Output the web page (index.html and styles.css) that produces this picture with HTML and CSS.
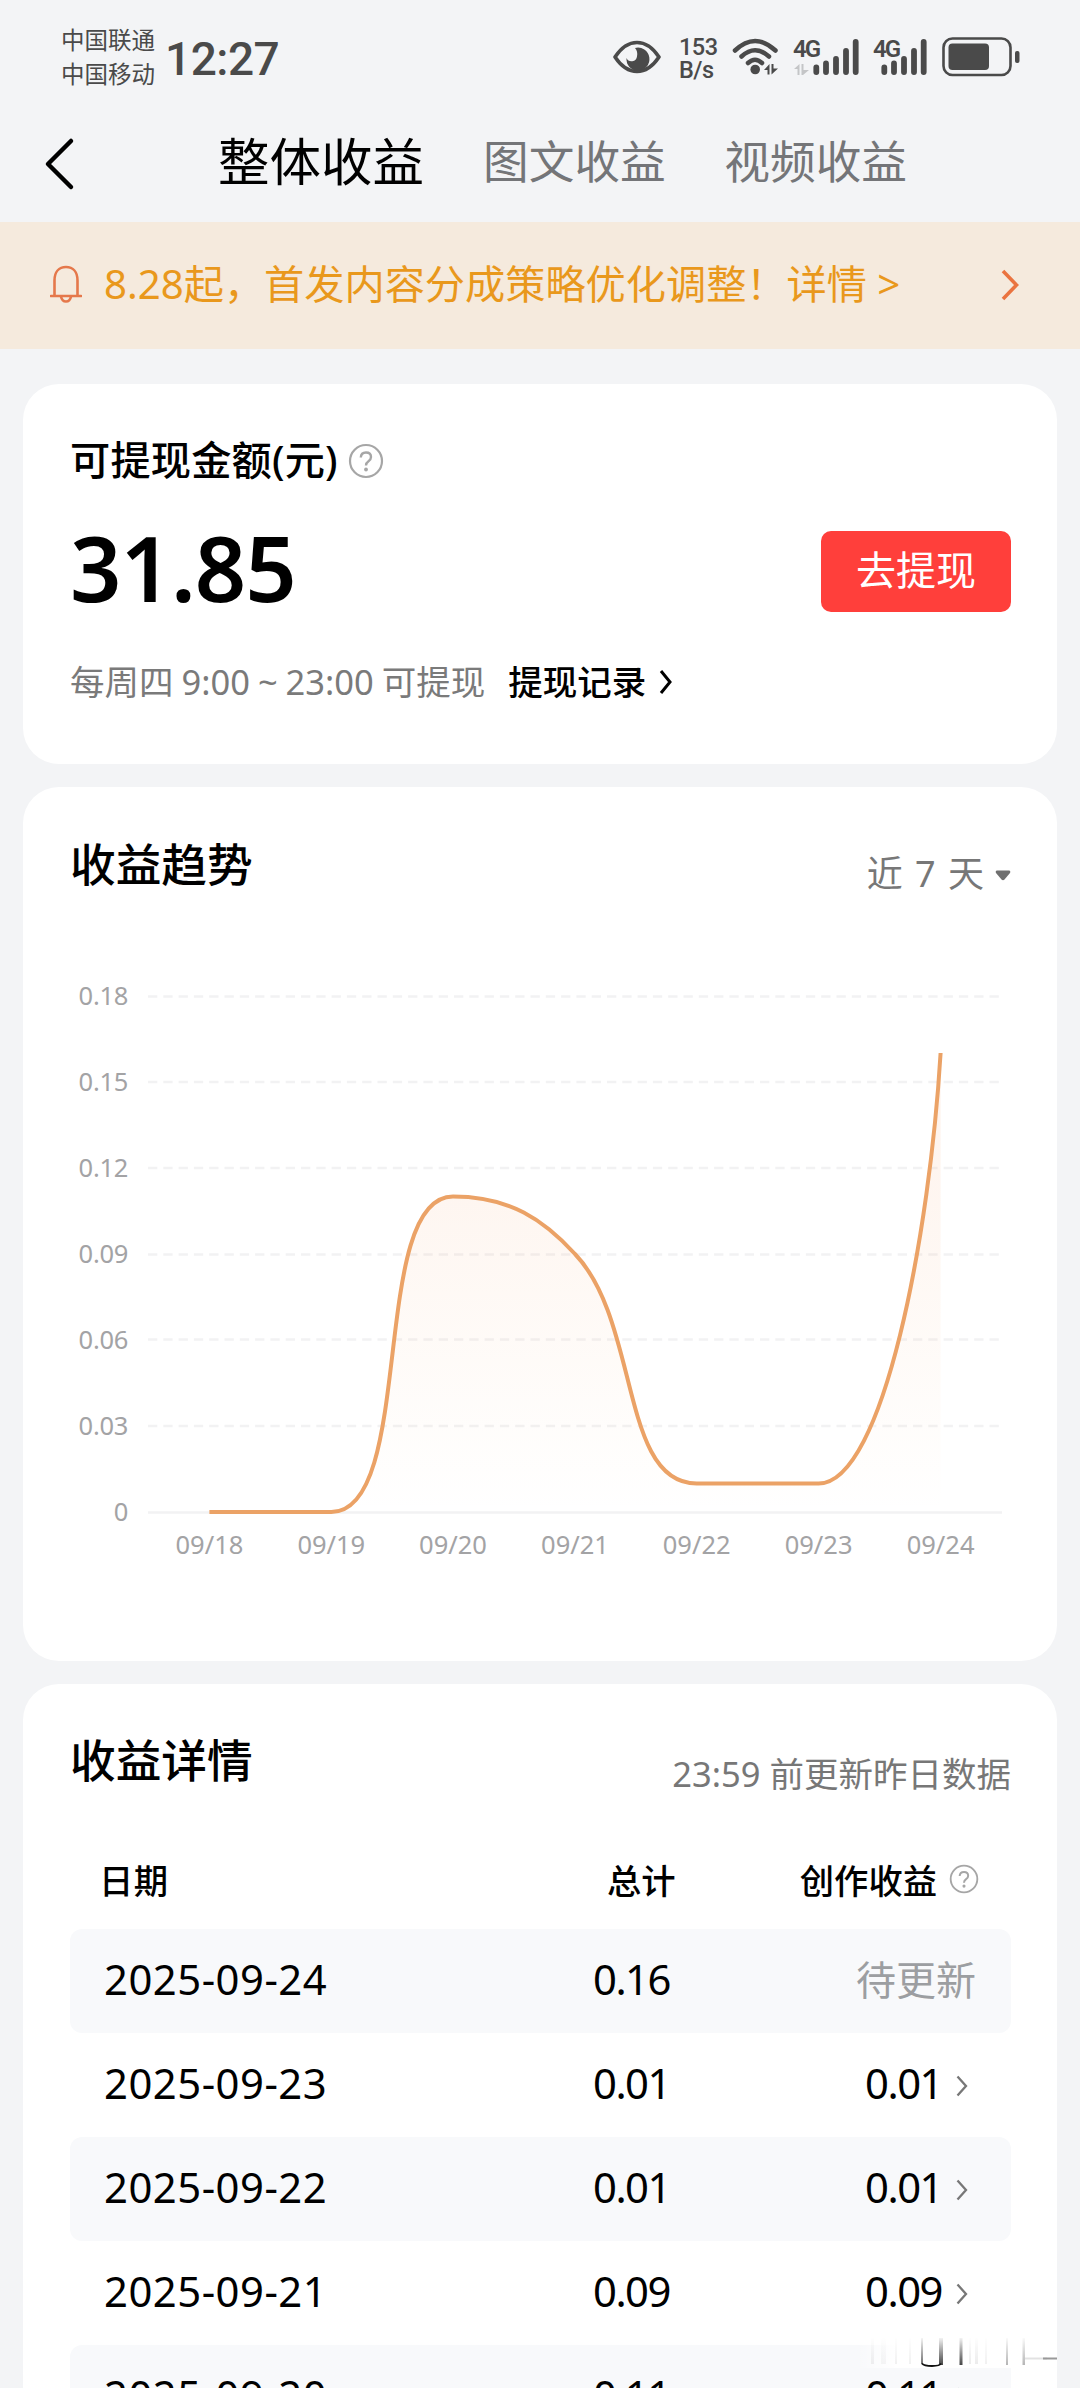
FILE: index.html
```html
<!DOCTYPE html>
<html lang="zh-CN">
<head>
    <meta charset="UTF-8">
    <meta name="viewport" content="width=device-width, initial-scale=1.0">
    <title>整体收益</title>
    <link rel="stylesheet" href="styles.css">
</head>
<body>
    <div class="status-bar">
        <div class="carriers">
            <div>中国联通</div>
            <div>中国移动</div>
        </div>
        <div class="clock">12:27</div>
        <div class="status-icons">
            <svg class="eye" width="48" height="34" viewBox="0 0 48 34">
                <path d="M2 17C8 8 15 2.500 24 2.500S40 8 46 17C40 26 33 31.500 24 31.500S8 26 2 17Z" fill="none" stroke="#4a4a4a" stroke-width="3.600" stroke-linejoin="round"/>
                <path d="M22 8A11.500 11.500 0 1 1 13.500 18A5.500 5.500 0 0 0 24 16.500Q25 11 22 8Z" fill="#4a4a4a"/>
                <path d="M14 22Q17 29 24 31Q31 29 34 22Z" fill="#4a4a4a"/>
            </svg>
            <div class="speed">
                <div>153</div>
                <div>B/s</div>
            </div>
            <svg class="wifi" width="48" height="38" viewBox="0 0 48 38">
                <g fill="none" stroke="#4a4a4a" stroke-width="4.500" stroke-linecap="round">
                    <path d="M3 12.500Q23 -6.500 43.500 12.500"/>
                    <path d="M9.500 18.500Q23 6 37 18.500"/>
                    <path d="M16 25Q23 18.500 30 25"/>
                </g>
                <circle cx="23.200" cy="31.500" r="4.800" fill="#4a4a4a"/>
                <path d="M32 32L37.500 26V36.500H35.500V32ZM39.500 26H41.500V30.500H46L39.500 36.500Z" fill="#4a4a4a"/>
            </svg>
            <svg class="signal" width="67" height="38" viewBox="0 0 67 38">
                <text x="0" y="19" class="net">4G</text>
                <path d="M1 31L6.500 26V37H4.500V31ZM8.500 26H10.500V32H16L10 37H8.500Z" fill="#c4c5c7"/>
                <g stroke="#4a4a4a" stroke-width="5.800" stroke-linecap="round">
                    <path d="M23.300 29.500V34M33 25.500V34M43 21V34M53 13V34M62.700 4V34"/>
                </g>
            </svg>
            <svg class="signal second" width="56" height="38" viewBox="0 0 56 38">
                <text x="0" y="19" class="net">4G</text>
                <g stroke="#4a4a4a" stroke-width="5.800" stroke-linecap="round">
                    <path d="M11.300 29.500V34M21 25.500V34M31 21V34M41 13V34M50.700 4V34"/>
                </g>
            </svg>
            <svg class="battery" width="78" height="42" viewBox="0 0 78 42">
                <rect x="1.500" y="2.500" width="67" height="36.500" rx="9" fill="none" stroke="#4a4a4a" stroke-width="2.600"/>
                <rect x="6.500" y="7.500" width="40.500" height="26.500" rx="4" fill="#4a4a4a"/>
                <rect x="73" y="15" width="4.500" height="12" rx="2" fill="#4a4a4a"/>
            </svg>
        </div>
    </div>

    <div class="nav">
        <svg class="back" width="32" height="56" viewBox="0 0 32 56">
            <path d="M27 5L4 28L27 51" fill="none" stroke="#000" stroke-width="4.500" stroke-linecap="round" stroke-linejoin="round"/>
        </svg>
        <div class="tab active">整体收益</div>
        <div class="tab">图文收益</div>
        <div class="tab">视频收益</div>
    </div>

    <div class="notice">
        <svg width="32" height="38" viewBox="0 0 32 38" fill="none" stroke="#e5784b" stroke-width="2.600">
            <path d="M4.500 31V15.500C4.500 7 9 2 16 2S27.500 7 27.500 15.500V31M1 31H31" stroke-linecap="round"/>
            <path d="M11 31.500Q12 36.500 16 36.500T21 31.500"/>
        </svg>
        <div class="notice-text">8.28起，首发内容分成策略优化调整！详情 &gt;</div>
        <svg class="notice-arrow" width="18" height="32" viewBox="0 0 18 32">
            <path d="M2 2L15.500 16L2 30" fill="none" stroke="#ea7440" stroke-width="3.600"/>
        </svg>
    </div>

    <div class="card balance">
        <div class="balance-title">
            <span>可提现金额(元)</span>
            <svg width="36" height="36" viewBox="0 0 36 36">
                <circle cx="18" cy="18" r="16" fill="none" stroke="#a6a6a6" stroke-width="2.200"/>
                <path d="M12.800 14.500Q13 9.500 18 9.500T23 14Q23 16.500 20.500 18.200T18 22.500" fill="none" stroke="#a6a6a6" stroke-width="2.400"/>
                <circle cx="18" cy="26.500" r="1.900" fill="#a6a6a6"/>
            </svg>
        </div>
        <div class="balance-row">
            <div class="amount">31.85</div>
            <button class="withdraw">去提现</button>
        </div>
        <div class="balance-foot">
            <span class="hint">每周四 9:00 ~ 23:00 可提现</span>
            <span class="record">提现记录</span>
            <svg width="14" height="26" viewBox="0 0 14 26">
                <path d="M2 2L11 13L2 24" fill="none" stroke="#000" stroke-width="3"/>
            </svg>
        </div>
    </div>

    <div class="card trend">
        <div class="card-head">
            <h2>收益趋势</h2>
            <div class="range">
                <span>近 7 天</span>
                <svg width="16" height="11" viewBox="0 0 16 11">
                    <path d="M2 .5H14Q16 1 15 3L9.500 9.500Q8 11 6.500 9.500L1 3Q0 1 2 .5Z" fill="#6f6f6f"/>
                </svg>
            </div>
        </div>
        <svg class="chart" width="941" height="600" viewBox="0 0 941 600">
            <defs>
                <linearGradient id="area" x1="0" y1="83" x2="0" y2="542" gradientUnits="userSpaceOnUse">
                    <stop offset="0" stop-color="#f58a50" stop-opacity=".12"/>
                    <stop offset="1" stop-color="#f5a050" stop-opacity="0"/>
                </linearGradient>
            </defs>
            <g class="grid">
                <path d="M78 26.500H932M78 112H932M78 198H932M78 284.500H932M78 369.500H932M78 456H932"/>
                <path class="axis" d="M78 542.500H932"/>
            </g>
            <path d="M139.400 542H261.300C346 542 299 226.500 383 226.500C440 226.500 474 250 505 284C570 352 550 513.500 626.700 513.500H748.600C814 513.500 860 260 870.600 83V542Z" fill="url(#area)"/>
            <path d="M139.400 542H261.300C346 542 299 226.500 383 226.500C440 226.500 474 250 505 284C570 352 550 513.500 626.700 513.500H748.600C814 513.500 860 260 870.600 83" fill="none" stroke="#eba266" stroke-width="4"/>
            <g class="y-labels">
                <text x="58" y="35">0.18</text>
                <text x="58" y="121">0.15</text>
                <text x="58" y="206.500">0.12</text>
                <text x="58" y="292.500">0.09</text>
                <text x="58" y="378.500">0.06</text>
                <text x="58" y="464.500">0.03</text>
                <text x="58" y="550.500">0</text>
            </g>
            <g class="x-labels">
                <text x="139.400" y="584">09/18</text>
                <text x="261.300" y="584">09/19</text>
                <text x="383" y="584">09/20</text>
                <text x="505" y="584">09/21</text>
                <text x="626.700" y="584">09/22</text>
                <text x="748.600" y="584">09/23</text>
                <text x="870.600" y="584">09/24</text>
            </g>
        </svg>
    </div>

    <div class="card detail">
        <div class="card-head">
            <h2>收益详情</h2>
            <div class="update">23:59 前更新昨日数据</div>
        </div>
        <div class="row head">
            <div class="date">日期</div>
            <div class="total">总计</div>
            <div class="income">
                创作收益
                <svg width="30" height="30" viewBox="0 0 36 36">
                    <circle cx="18" cy="18" r="16" fill="none" stroke="#a6a6a6" stroke-width="2.200"/>
                    <path d="M12.800 14.500Q13 9.500 18 9.500T23 14Q23 16.500 20.500 18.200T18 22.500" fill="none" stroke="#a6a6a6" stroke-width="2.400"/>
                    <circle cx="18" cy="26.500" r="1.900" fill="#a6a6a6"/>
                </svg>
            </div>
        </div>
        <div class="row">
            <div class="date">2025-09-24</div>
            <div class="total">0.16</div>
            <div class="income pending">待更新</div>
        </div>
        <div class="row">
            <div class="date">2025-09-23</div>
            <div class="total">0.01</div>
            <div class="income">0.01<svg class="more" width="12" height="22" viewBox="0 0 12 22"><path d="M1.500 1.500L10 11L1.500 20.500"/></svg></div>
        </div>
        <div class="row">
            <div class="date">2025-09-22</div>
            <div class="total">0.01</div>
            <div class="income">0.01<svg class="more" width="12" height="22" viewBox="0 0 12 22"><path d="M1.500 1.500L10 11L1.500 20.500"/></svg></div>
        </div>
        <div class="row">
            <div class="date">2025-09-21</div>
            <div class="total">0.09</div>
            <div class="income">0.09<svg class="more" width="12" height="22" viewBox="0 0 12 22"><path d="M1.500 1.500L10 11L1.500 20.500"/></svg></div>
        </div>
        <div class="row">
            <div class="date">2025-09-20</div>
            <div class="total">0.11</div>
            <div class="income">0.11<svg class="more" width="12" height="22" viewBox="0 0 12 22"><path d="M1.500 1.500L10 11L1.500 20.500"/></svg></div>
        </div>
        <!-- faded strip over the last row -->
        <svg class="smudge" width="200" height="36" viewBox="0 0 200 36">
            <defs>
                <linearGradient id="streak" x1="0" y1="4" x2="0" y2="34" gradientUnits="userSpaceOnUse">
                    <stop offset="0" stop-color="#000" stop-opacity="0"/>
                    <stop offset="1" stop-color="#000"/>
                </linearGradient>
                <linearGradient id="edge" x1="0" y1="0" x2="1" y2="0">
                    <stop offset="0" stop-color="#fff" stop-opacity="0"/>
                    <stop offset=".2" stop-color="#fff"/>
                </linearGradient>
            </defs>
            <rect width="200" height="36" fill="url(#edge)"/>
            <g fill="url(#streak)">
                <rect x="64" y="6" width="2" height="26" opacity=".6"/>
                <rect x="82" y="6" width="4" height="27" opacity=".75"/>
                <rect x="102.500" y="6" width="3" height="27" opacity=".75"/>
                <rect x="149" y="6" width="2" height="27" opacity=".3"/>
                <rect x="165.500" y="6" width="2.500" height="27" opacity=".3"/>
                <rect x="14" y="6" width="3" height="26" opacity=".06"/>
                <rect x="24" y="6" width="5" height="26" opacity=".04"/>
                <rect x="38" y="6" width="2" height="26" opacity=".06"/>
                <rect x="52" y="6" width="2" height="26" opacity=".06"/>
                <rect x="112" y="6" width="2" height="26" opacity=".08"/>
                <rect x="118" y="6" width="3" height="26" opacity=".08"/>
                <rect x="128" y="6" width="2" height="26" opacity=".06"/>
            </g>
            <path d="M65 31.500Q67 34 75 34T84 31.500" fill="none" stroke="#111" stroke-width="1.800"/>
            <path d="M168 26.500H190" stroke="#e2e2e2" stroke-width="2"/>
            <path d="M186 26.500H200" stroke="#999" stroke-width="2"/>
        </svg>
    </div>
</body>
</html>
```
FILE: styles.css
```css
* {
    box-sizing: border-box;
}
body {
    margin: 0;
    width: 1080px;
    height: 2388px;
    overflow: hidden;
    background-color: #f3f4f6;
    color: #000;
    font-family: "Noto Sans", "Noto Sans CJK SC", sans-serif;
}
svg {
    display: block;
    flex-shrink: 0;
}
.status-bar {
    display: flex;
    height: 106px;
    padding: 0 60px 0 61px;
    color: #4a4a4a;
}
.carriers {
    width: 104px;
    padding-top: 23px;
    font-size: 23.5px;
    line-height: 34px;
}
.clock {
    padding-top: 32px;
    font-family: Roboto, sans-serif;
    font-size: 46px;
    font-weight: 500;
    line-height: 54px;
    letter-spacing: -0.5px;
}
.status-icons {
    display: flex;
    align-items: flex-start;
    margin-left: auto;
}
.eye {
    margin-top: 40px;
}
.speed {
    width: 38px;
    margin: 36px 15px 0 18px;
    font-family: Roboto, sans-serif;
    font-size: 23.5px;
    font-weight: 500;
    line-height: 23px;
    letter-spacing: -0.5px;
}
.wifi {
    margin-top: 38px;
}
.signal {
    margin: 38px 0 0 13px;
    overflow: visible;
}
.signal.second {
    margin-left: 13px;
}
.net {
    font-family: Roboto, sans-serif;
    font-size: 24px;
    font-weight: 600;
    letter-spacing: -2px;
    fill: #4a4a4a;
}
.battery {
    margin: 36px 0 0 13px;
}

.nav {
    display: flex;
    align-items: center;
    height: 116px;
    padding: 0 0 11px 44px;
}
.back {
    margin: 11px 142px 0 0;
}
.tab {
    margin-right: 58.500px;
    font-size: 45.7px;
    color: #747578;
    white-space: nowrap;
}
.tab.active {
    margin-right: 59px;
    font-size: 51.500px;
    color: #000;
}

.notice {
    display: flex;
    align-items: center;
    height: 127px;
    padding: 0 61px 3px 50px;
    background-color: #f5eadd;
}
.notice-text {
    margin: -5px 0 0 22px;
    font-size: 40.2px;
    color: #e9981c;
    white-space: nowrap;
}
.notice-arrow {
    margin: 2px 0 0 auto;
}

.card {
    position: relative;
    margin: 0 23px 23px;
    padding: 0 46px 0 47px;
    border-radius: 36px;
    background-color: #fff;
}
.balance {
    height: 380px;
    margin-top: 35px;
    padding-top: 43px;
}
.balance-title {
    display: flex;
    align-items: center;
    height: 60px;
    font-size: 40.2px;
    font-weight: 500;
    letter-spacing: 0.2px;
}
.balance-title svg {
    margin: 7px 0 0 10px;
}
.balance-row {
    display: flex;
    align-items: center;
    justify-content: space-between;
    height: 138px;
    padding-top: 21px;
}
.amount {
    font-size: 90px;
    font-weight: 600;
    line-height: 100px;
    letter-spacing: -1px;
}
.withdraw {
    width: 190px;
    height: 81px;
    margin-top: 10px;
    padding: 0 0 7px;
    border: none;
    border-radius: 10px;
    background-color: #ff3f3b;
    color: #fff;
    font-family: inherit;
    font-size: 40px;
}
.balance-foot {
    display: flex;
    align-items: center;
    height: 50px;
    margin-top: 30px;
    font-size: 34.5px;
    white-space: nowrap;
}
.hint {
    color: #7a7a7a;
    word-spacing: -1px;
}
.record {
    margin: 0 13px 0 23px;
    font-weight: 500;
}
.balance-foot svg {
    margin-top: 4px;
}

.trend {
    height: 874px;
    padding-top: 49px;
}
.card-head {
    display: flex;
    align-items: flex-start;
    justify-content: space-between;
    height: 134px;
}
h2 {
    margin: -2px 0 0;
    font-size: 45.7px;
    font-weight: 500;
    line-height: 60px;
}
.range {
    display: flex;
    align-items: center;
    padding-top: 10px;
    color: #777;
    font-size: 36px;
    line-height: 56px;
    word-spacing: 3px;
}
.range svg {
    margin: 3px 0 0 11px;
}
.grid {
    fill: none;
    stroke: #f2f2f3;
    stroke-width: 2.500;
    stroke-dasharray: 9.300 6;
}
.grid .axis {
    stroke-dasharray: none;
}
.y-labels,
.x-labels {
    font-size: 25.5px;
    fill: #a3a3a5;
}
.y-labels {
    text-anchor: end;
    letter-spacing: -0.3px;
}
.x-labels {
    text-anchor: middle;
}

.detail {
    height: 800px;
    padding-top: 48px;
}
.update {
    padding-top: 15px;
    color: #777;
    font-size: 34.5px;
    line-height: 54px;
}
.detail .card-head {
    height: 102px;
}
.row {
    display: flex;
    align-items: center;
    height: 104px;
    padding: 0 35px 6px 34px;
    border-radius: 12px;
    font-size: 41.8px;
}
.row:nth-child(odd) {
    background-color: #f8f9fb;
}
.row.head {
    height: 95px;
    padding: 0 32px 5px 29px;
    background-color: transparent;
    font-size: 34.3px;
    font-weight: 500;
}
.date {
    width: 489px;
    letter-spacing: 0.5px;
}
.total,
.income {
    letter-spacing: -1.5px;
}
.head .date {
    width: 508px;
}
.head .total,
.head .income,
.pending {
    letter-spacing: 0;
}
.income {
    display: flex;
    align-items: center;
    margin-left: auto;
}
.income svg {
    margin-left: 12px;
}
.income .more {
    margin: 7px 8px 0 14px;
    fill: none;
    stroke: #777;
    stroke-width: 2.300;
}
.pending {
    color: #9c9ea1;
    font-size: 40px;
}
.smudge {
    position: absolute;
    top: 648px;
    right: 0;
}
```
